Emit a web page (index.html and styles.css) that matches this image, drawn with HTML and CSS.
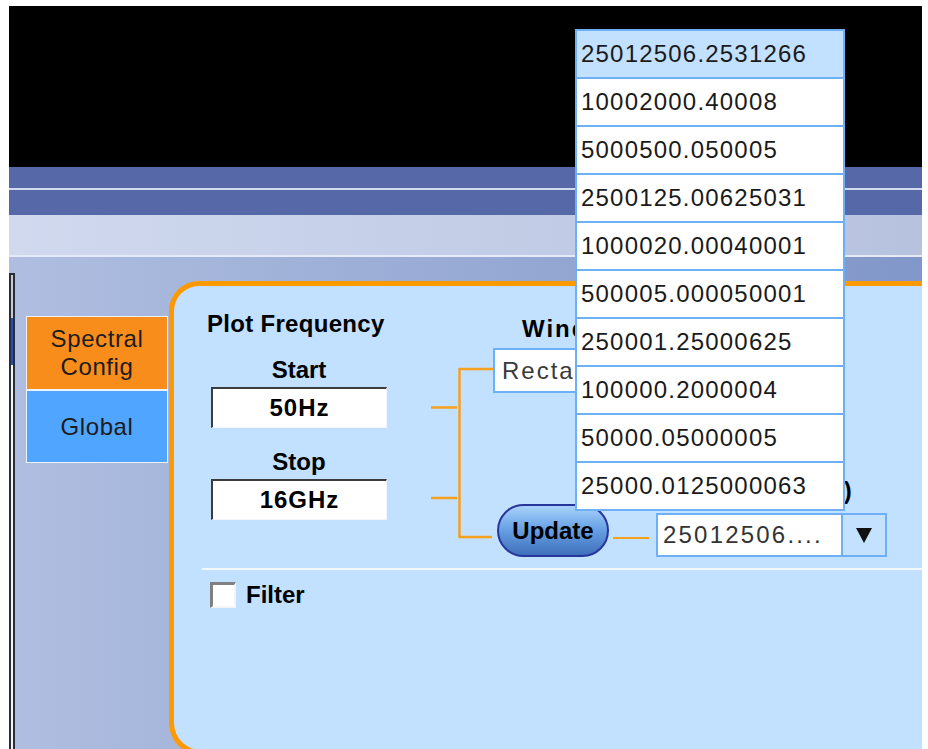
FILE: index.html
```html
<!DOCTYPE html>
<html lang="en">
<head>
    <meta charset="UTF-8">
    <meta name="viewport" content="width=device-width, initial-scale=1.0">
    <title>Spectral Config</title>
    <link rel="stylesheet" href="styles.css">
</head>
<body>
    <div class="screen">
        <div class="display"></div>
        <div class="menubar"></div>
        <div class="toolbar"></div>

        <div class="workarea">
            <div class="edge"></div>

            <div class="tabs">
                <div class="tab tab-spectral">Spectral<br>Config</div>
                <div class="tab tab-global">Global</div>
            </div>

            <div class="panel">
                <div class="settings">
                    <div class="freq">
                        <div class="title">Plot Frequency</div>
                        <div class="field-label">Start</div>
                        <div class="field">50Hz</div>
                        <div class="field-label field-label-stop">Stop</div>
                        <div class="field">16GHz</div>
                    </div>

                    <svg class="wires" width="63" height="185" viewBox="0 0 63 185">
                        <g stroke="#f6a11c" stroke-width="2.5" fill="none">
                            <line x1="1" y1="47.5" x2="27" y2="47.5"/>
                            <line x1="1" y1="138" x2="27" y2="138"/>
                            <line x1="29.5" y1="8" x2="29.5" y2="178"/>
                            <line x1="29" y1="9" x2="63" y2="9"/>
                            <line x1="29" y1="177" x2="62" y2="177"/>
                        </g>
                    </svg>

                    <div class="window">
                        <div class="title window-title">Window</div>
                        <div class="select">Rectangular</div>
                        <div class="actions">
                            <button class="update">Update</button>
                            <span class="wire"></span>
                            <div class="rbw">
                                <div class="title rbw-title">Span/RBW (Hz)</div>
                                <div class="combo">
                                    <span class="combo-value">25012506....</span>
                                    <span class="combo-arrow"><span class="triangle"></span></span>
                                </div>
                            </div>
                        </div>
                    </div>
                </div>

                <div class="divider"></div>

                <label class="filter"><span class="checkbox"></span>Filter</label>
            </div>
        </div>

        <!-- open list of the span/rbw combo -->
        <ul class="dropdown">
            <li class="selected">25012506.2531266</li>
            <li>10002000.40008</li>
            <li>5000500.050005</li>
            <li>2500125.00625031</li>
            <li>1000020.00040001</li>
            <li>500005.000050001</li>
            <li>250001.25000625</li>
            <li>100000.2000004</li>
            <li>50000.05000005</li>
            <li>25000.0125000063</li>
        </ul>
    </div>
</body>
</html>
```

FILE: styles.css
```css
body {
    margin: 0;
    background: #fff;
    overflow: hidden;
    font-family: "Liberation Sans", Arial, sans-serif;
    font-size: 24px;
    color: #000;
}
.screen {
    position: relative;
    margin: 6px 6px 0 9px;
    height: 743px;
    overflow: hidden;
}
.display {
    height: 161px;
    background: #000;
}
.menubar {
    height: 48px;
    background: linear-gradient(#5668a8 0, #5668a8 21px, #d2daee 21px, #d2daee 23px, #5668a8 23px);
}
.toolbar {
    height: 40px;
    background: linear-gradient(to right, #d0d9ee, #b7c2df);
    border-bottom: 2px solid #e4eaf6;
}
.workarea {
    display: flex;
    align-items: flex-start;
    height: 492px;
    overflow: hidden;
    background: linear-gradient(to right, #afbee0, #8197c9);
}
.edge {
    width: 6px;
    height: 480px;
    margin-top: 16px;
    box-sizing: border-box;
    border: 2px solid #2b2d36;
    border-bottom: none;
    background: linear-gradient(#c5cad3 0, #c5cad3 43px, #1e4fc0 43px, #1e4fc0 90px, #f4f4f4 90px);
}
.tabs {
    width: 142px;
    margin: 59px 0 0 11px;
    box-sizing: border-box;
    border: 1px solid #eef3fb;
    background: #eef3fb;
}
.tab {
    display: flex;
    align-items: center;
    justify-content: center;
    text-align: center;
    line-height: 28px;
    letter-spacing: 0.6px;
    color: #1c1c1c;
}
.tab-spectral {
    height: 72px;
    background: #f98d1c;
}
.tab-global {
    height: 71px;
    margin-top: 2px;
    background: #50a5ff;
}
.panel {
    flex: 1;
    height: 474px;
    margin: 24px 0 0 1px;
    box-sizing: border-box;
    border: 5px solid #ff9900;
    border-right: none;
    border-radius: 30px 0 0 32px;
    background: #c2e0ff;
}
.settings {
    display: flex;
    align-items: flex-start;
    padding: 24px 0 0 33px;
}
.title {
    font-weight: bold;
    line-height: 28px;
    letter-spacing: 0.3px;
}
.freq {
    width: 180px;
}
.field-label {
    margin: 18px 0 0 4px;
    width: 176px;
    text-align: center;
    font-weight: bold;
    line-height: 28px;
}
.field-label-stop {
    margin-top: 20px;
}
.field {
    margin: 3px 0 0 4px;
    width: 176px;
    height: 41px;
    box-sizing: border-box;
    border-top: 2px solid #3c3c3c;
    border-left: 2px solid #3c3c3c;
    border-right: 1px solid #f2f6fb;
    border-bottom: 1px solid #f2f6fb;
    background: #fff;
    text-align: center;
    font-weight: bold;
    line-height: 38px;
    letter-spacing: 1px;
}
.wires {
    display: block;
    margin: 50px 0 0 43px;
}
.window {
    width: 394px;
}
.window-title {
    margin: 5px 0 0 29px;
    letter-spacing: 2px;
}
.select {
    width: 260px;
    height: 45px;
    margin-top: 5px;
    box-sizing: border-box;
    border: 2px solid #6db0f6;
    background: #fff;
    padding-left: 7px;
    line-height: 41px;
    letter-spacing: 2px;
    color: #3a3a3a;
}
.actions {
    display: flex;
    align-items: flex-end;
    margin-top: 84px;
}
.update {
    width: 112px;
    height: 53px;
    margin-left: 4px;
    padding: 0;
    border: 2px solid #28359c;
    border-radius: 27px;
    background: linear-gradient(#a9d2fa, #6aa3e6 45%, #3f70bb);
    font-family: "Liberation Sans", Arial, sans-serif;
    font-size: 24px;
    font-weight: bold;
    color: #000;
}
.wire {
    display: block;
    width: 36px;
    height: 2px;
    margin: 0 0 18px 4px;
    background: #f6a11c;
}
.rbw {
    width: 231px;
    margin-left: 7px;
}
.rbw-title {
    text-align: right;
    padding-right: 35px;
    margin-bottom: 8px;
    white-space: nowrap;
}
.combo {
    display: flex;
    height: 44px;
    box-sizing: border-box;
    border: 2px solid #6db0f6;
}
.combo-value {
    flex: 1;
    background: #fff;
    padding-left: 5px;
    line-height: 40px;
    letter-spacing: 2.2px;
    color: #333;
}
.combo-arrow {
    display: flex;
    align-items: center;
    justify-content: center;
    width: 44px;
    box-sizing: border-box;
    border-left: 2px solid #6db0f6;
    background: #c4e1ff;
}
.triangle {
    width: 0;
    height: 0;
    border-left: 8.5px solid transparent;
    border-right: 8.5px solid transparent;
    border-top: 15px solid #111;
}
.divider {
    height: 2px;
    margin: 11px 0 0 28px;
    background: #f2f8ff;
}
.filter {
    display: flex;
    align-items: center;
    gap: 10px;
    margin: 11px 0 0 36px;
    font-weight: bold;
    line-height: 28px;
}
.checkbox {
    width: 26px;
    height: 26px;
    box-sizing: border-box;
    border-top: 3px solid #808080;
    border-left: 3px solid #808080;
    border-right: 2px solid #f4f4f4;
    border-bottom: 2px solid #f4f4f4;
    background: #fff;
}
.dropdown {
    position: absolute;
    left: 566px;
    top: 23px;
    width: 270px;
    margin: 0;
    padding: 0;
    list-style: none;
    box-sizing: border-box;
    border: 2px solid #6db0f6;
    border-bottom: none;
    background: #fff;
}
.dropdown li {
    height: 46px;
    padding-left: 4px;
    border-bottom: 2px solid #6db0f6;
    line-height: 46px;
    letter-spacing: 1.2px;
    color: #1a1a1a;
}
.dropdown li.selected {
    background: #c2e0ff;
}
```
